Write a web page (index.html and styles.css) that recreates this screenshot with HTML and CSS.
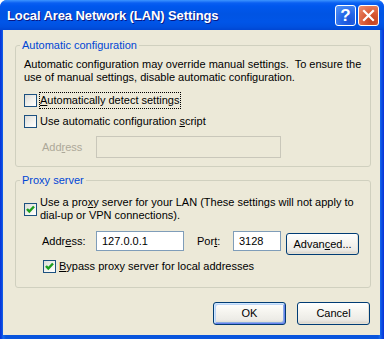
FILE: index.html
```html
<!DOCTYPE html>
<html>
<head>
<meta charset="utf-8">
<link rel="stylesheet" href="styles.css">
</head>
<body>
<div class="window">
  <div class="titlebar">
    <span class="title">Local Area Network (LAN) Settings</span>
    <div class="caption-btns">
      <span class="cap help">?</span>
      <span class="cap close"><svg width="19" height="19" viewBox="0 0 19 19"><path d="M5 5 L14 14 M14 5 L5 14" stroke="#fff" stroke-width="2.2" stroke-linecap="square"/></svg></span>
    </div>
  </div>
  <div class="client">
    <fieldset class="group group-auto">
      <legend>Automatic configuration</legend>
      <p class="desc">Automatic configuration may override manual settings.&nbsp; To ensure the<br>use of manual settings, disable automatic configuration.</p>
      <label class="check first"><span class="box"></span><span class="lbl focus"><u>A</u>utomatically detect settings</span></label>
      <label class="check second"><span class="box"></span><span class="lbl">Use automatic configuration <u>s</u>cript</span></label>
      <div class="field-row auto-addr">
        <span class="field-label disabled">Add<u>r</u>ess</span>
        <span class="input input-disabled wide"></span>
      </div>
    </fieldset>
    <fieldset class="group group-proxy">
      <legend>Proxy server</legend>
      <label class="check proxy-check"><span class="box"><svg class="tick" width="11" height="11" viewBox="0 0 11 11"><path d="M2 5 L4.3 7.5 L9 2.5" fill="none" stroke="#1E9E1E" stroke-width="2.5"/></svg></span><span class="lbl">Use a pro<u>x</u>y server for your LAN (These settings will not apply to<br>dial-up or VPN connections).</span></label>
      <div class="field-row proxy-row">
        <span class="field-label">Addr<u>e</u>ss:</span>
        <span class="input addr">127.0.0.1</span>
        <span class="field-label port-label">Por<u>t</u>:</span>
        <span class="input port">3128</span>
        <span class="btn adv">Advan<u>c</u>ed...</span>
      </div>
      <label class="check bypass"><span class="box"><svg class="tick" width="11" height="11" viewBox="0 0 11 11"><path d="M2 5 L4.3 7.5 L9 2.5" fill="none" stroke="#1E9E1E" stroke-width="2.5"/></svg></span><span class="lbl"><u>B</u>ypass proxy server for local addresses</span></label>
    </fieldset>
    <div class="buttons">
      <span class="btn default">OK</span>
      <span class="btn">Cancel</span>
    </div>
  </div>
</div>
</body>
</html>
```

FILE: styles.css
```css
* { box-sizing: border-box; }
html, body { margin: 0; padding: 0; }
body {
  width: 384px;
  height: 339px;
  overflow: hidden;
  background: #fff;
  font-family: Tahoma, "Liberation Sans", sans-serif;
  font-size: 11px;
  line-height: 13px;
  color: #000;
}
u { text-decoration: underline; text-underline-offset: 1px; }

.window {
  width: 384px;
  height: 339px;
  display: flex;
  flex-direction: column;
  background: linear-gradient(90deg, #0831D9 0, #0A4BE0 2px, #166AEE 3px, #0855DD 6px, #0855DD 378px, #166AEE 380px, #0A4BE0 382px, #0831D9 384px);
  border-radius: 7px 7px 0 0;
  overflow: hidden;
}

.titlebar {
  height: 30px;
  flex: none;
  display: flex;
  align-items: center;
  padding: 0 5px 0 7px;
  background: linear-gradient(180deg, #3D95FF 0, #0A5FF2 3px, #0058EE 6px, #0054E3 14px, #0055E8 22px, #0050DF 27px, #0046D3 30px);
}
.title {
  flex: 1;
  color: #fff;
  font-family: "Liberation Sans", sans-serif;
  font-weight: bold;
  font-size: 13px;
  letter-spacing: -0.1px;
  text-shadow: 1px 1px 0 #0A1883;
  padding-top: 1px;
}
.caption-btns {
  display: flex;
  gap: 2px;
  margin-top: 1px;
}
.cap {
  width: 21px;
  height: 21px;
  border: 1px solid #fff;
  border-radius: 3px;
  display: flex;
  align-items: center;
  justify-content: center;
}
.help {
  background: radial-gradient(circle at 70% 80%, #1A52D8 0, #2466E8 40%, #4E8EF5 90%);
  color: #fff;
  font-family: "Liberation Sans", sans-serif;
  font-weight: bold;
  font-size: 17px;
}
.close {
  background: radial-gradient(circle at 70% 80%, #C1411E 0, #D85A35 40%, #EE8C6C 95%);
}

.client {
  flex: 1;
  margin: 0 4px 4px 3px;
  background: #ECE9D8;
  padding: 9px 0 0 12px;
  display: flex;
  flex-direction: column;
}

.group {
  width: 356px;
  margin: 0;
  border: 1px solid #D0D0BF;
  border-radius: 3px;
  padding: 0 8px;
  display: flex;
  flex-direction: column;
  align-items: flex-start;
}
.group legend {
  color: #0046D5;
  padding: 0 2px;
  margin-left: -4px;
  line-height: 13px;
}
.group-auto { padding-top: 6px; padding-bottom: 8px; }
.group-proxy { margin-top: 7px; padding-top: 8px; padding-bottom: 12px; }

.desc { margin: 0; }

.check {
  display: flex;
  align-items: center;
  gap: 2px;
}
.check.first { margin-top: 8px; }
.check.second { margin-top: 4px; }
.box {
  width: 13px;
  height: 13px;
  flex: none;
  border: 1px solid #1C5180;
  background: linear-gradient(135deg, #DCDCD7 0, #F4F4F0 60%, #FFFFFF 100%);
  display: flex;
  align-items: center;
  justify-content: center;
}
.lbl {
  border: 1px solid transparent;
  padding: 1px 1px 1px 0;
}
.lbl.focus { border: 1px dotted #000; }
.proxy-check .lbl { padding: 0; }
.bypass { margin-top: 3px; margin-left: 19px; }

.field-row {
  display: flex;
  align-items: flex-start;
}
.field-label {
  padding-left: 18px;
  width: 72px;
}
.disabled { color: #ACA899; }
.input {
  height: 20px;
  border: 1px solid #7F9DB9;
  background: #fff;
  padding: 3px 0 0 5px;
}
.input-disabled {
  border-color: #C9C7BA;
  background: #ECE9D8;
}
.auto-addr { margin-top: 6px; align-items: center; }
.wide { width: 185px; height: 22px; }
.proxy-row { margin-top: 8px; width: 100%; }
.proxy-row .field-label { padding-top: 4px; }
.addr { width: 88px; }
.port-label { padding-left: 13px; width: 49px; }
.port { width: 48px; }

.btn {
  display: flex;
  align-items: center;
  justify-content: center;
  height: 23px;
  border: 1px solid #003C74;
  border-radius: 3px;
  background: linear-gradient(180deg, #FFFFFF 0, #F6F5F0 40%, #ECEBE6 80%, #D6D0C5 100%);
  box-shadow: inset -1px -1px 0 #E3E0D5;
}
.adv { width: 73px; margin-left: 5px; margin-top: 2px; height: 22px; }
.buttons {
  margin-top: 14px;
  display: flex;
  justify-content: flex-end;
  gap: 11px;
  padding-right: 10px;
}
.buttons .btn { width: 73px; }
.btn.default {
  box-shadow: inset 1px 1px 0 #CEE7FF, inset -1px -1px 0 #6982EE, inset 2px 2px 0 #BCD4F6, inset -2px -2px 0 #89ADE4;
}
```
